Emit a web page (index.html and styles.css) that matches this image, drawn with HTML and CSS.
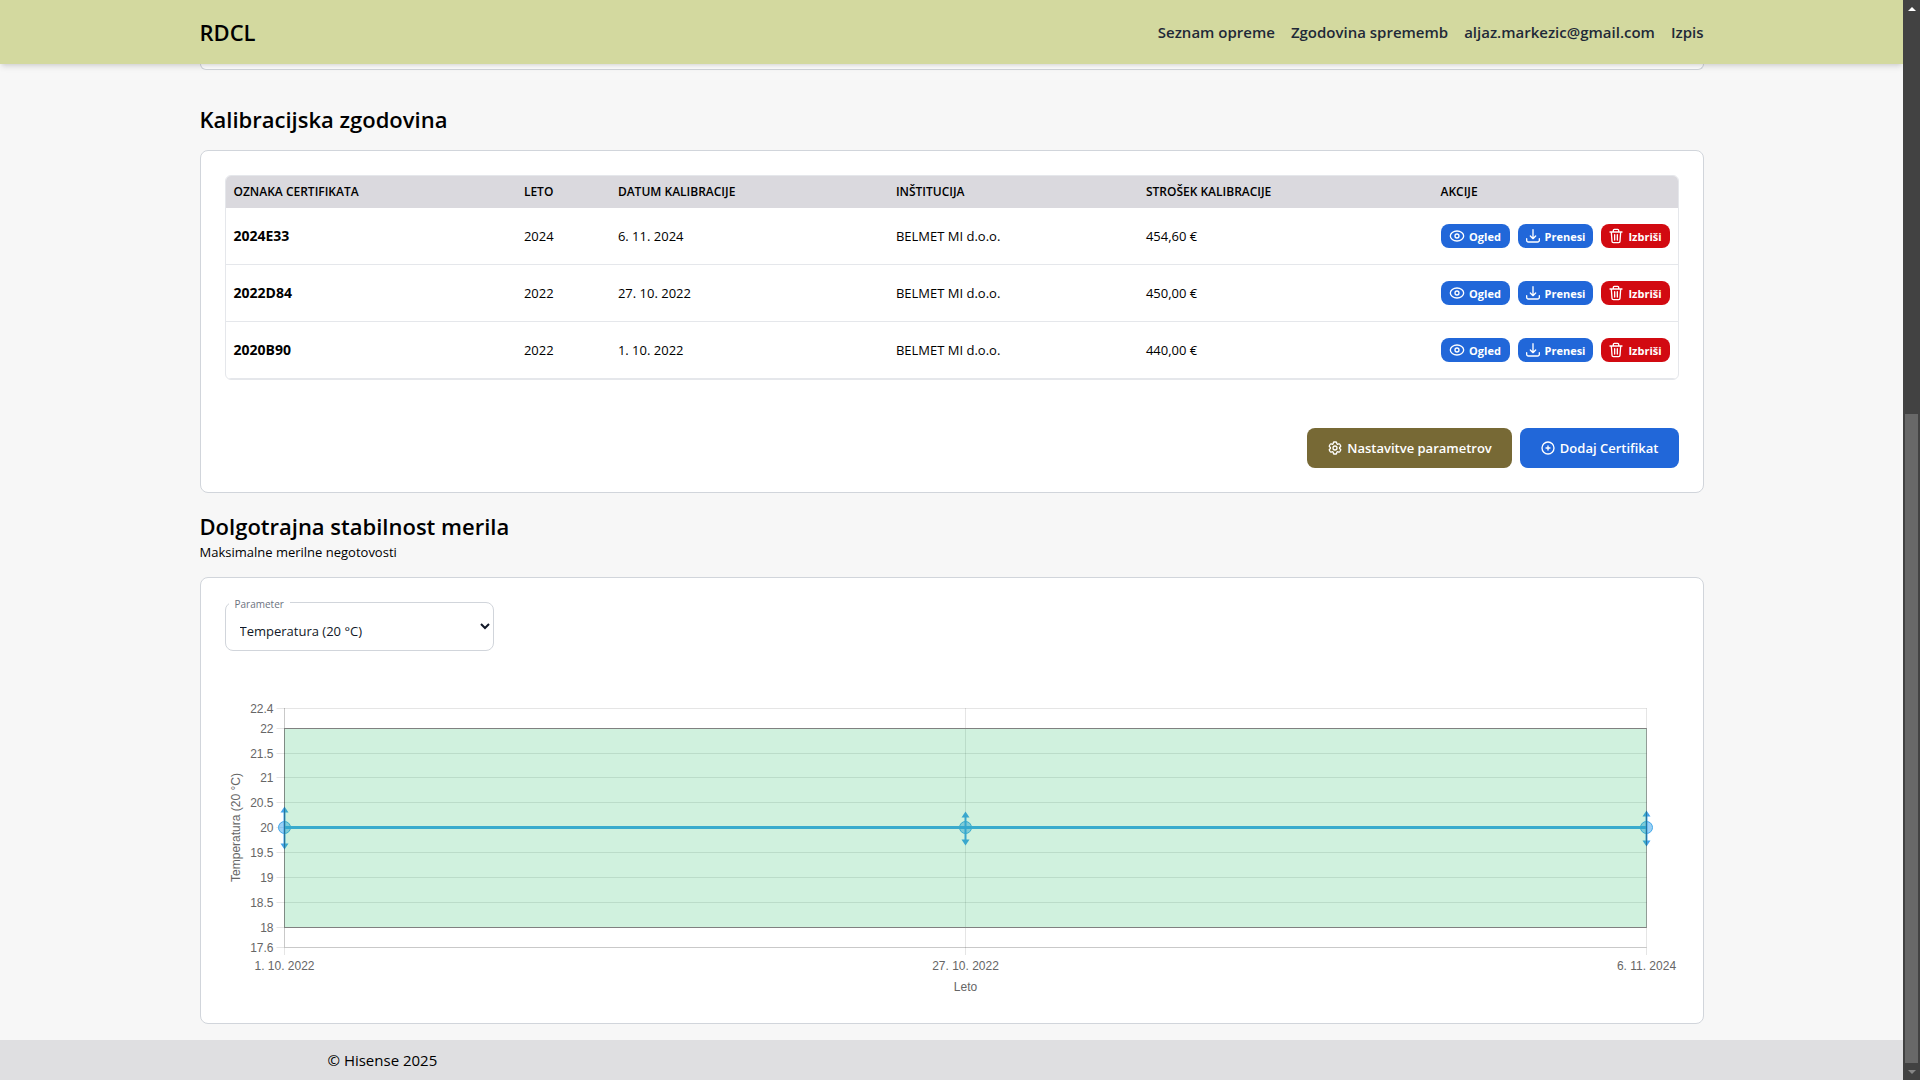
FILE: index.html
```html
<!DOCTYPE html>
<html lang="sl">
<head>
  <meta charset="UTF-8" />
  <meta name="viewport" content="width=device-width, initial-scale=1.0" />
  <title>RDCL</title>
  <link rel="stylesheet" href="styles.css">
</head>
<body>
  <!-- Icons -->
  <svg class="icon-defs" aria-hidden="true">
    <symbol id="icon-eye" viewBox="0 0 24 24">
      <ellipse cx="12" cy="12" rx="10" ry="7.500" />
      <circle cx="12" cy="12" r="3" />
    </symbol>
    <symbol id="icon-download" viewBox="0 0 24 24">
      <path d="M12 2.500v13.500m0 0 4-4m-4 4-4-4M2.500 16v2.500a2.500 2.500 0 0 0 2.500 2.500h14a2.500 2.500 0 0 0 2.500-2.500V16" />
    </symbol>
    <symbol id="icon-trash" viewBox="0 0 24 24">
      <path d="M3 6h18M5 6l1 14a2 2 0 0 0 2 2h8a2 2 0 0 0 2-2l1-14M8 6V3.500A1.500 1.500 0 0 1 9.500 2h5A1.500 1.500 0 0 1 16 3.500V6M10 10v8M14 10v8" />
    </symbol>
    <symbol id="icon-gear" viewBox="0 0 24 24">
      <path d="M9.600 3.940c.09-.54.56-.94 1.110-.94h2.590c.55 0 1.020.4 1.110.94l.21 1.280c.06.37.31.69.650.87.07.04.150.08.220.13.32.2.720.260 1.080.12l1.220-.45a1.130 1.130 0 0 1 1.370.49l1.300 2.250a1.130 1.130 0 0 1-.26 1.430l-1 .83c-.3.240-.440.610-.430.990v.25c-.010.380.130.750.430 1l1 .82c.43.350.540.960.260 1.430l-1.300 2.250a1.130 1.130 0 0 1-1.370.49l-1.220-.46c-.35-.130-.750-.070-1.070.12l-.22.130c-.330.180-.580.500-.640.870l-.22 1.280c-.090.540-.560.940-1.110.940h-2.590c-.550 0-1.020-.4-1.110-.94l-.21-1.280c-.060-.370-.310-.690-.650-.870l-.22-.130c-.320-.190-.720-.250-1.070-.120l-1.220.46a1.130 1.130 0 0 1-1.370-.49l-1.300-2.250a1.130 1.130 0 0 1 .26-1.430l1-.83c.3-.240.440-.610.430-.990v-.250c.010-.380-.130-.750-.430-1l-1-.820a1.130 1.130 0 0 1-.26-1.430l1.300-2.250a1.130 1.130 0 0 1 1.370-.49l1.220.450c.350.140.750.080 1.070-.12l.22-.120c.340-.190.590-.510.650-.880l.21-1.270Z" />
      <circle cx="12" cy="12" r="3" />
    </symbol>
    <symbol id="icon-plus" viewBox="0 0 24 24">
      <circle cx="12" cy="12" r="9" />
      <path d="M12 9v6M9 12h6" />
    </symbol>
  </svg>

  <header class="topbar">
    <div class="container topbar-inner">
      <a class="brand" href="#">RDCL</a>
      <nav class="nav">
        <a href="#">Seznam opreme</a>
        <a href="#">Zgodovina sprememb</a>
        <a href="#">aljaz.markezic@gmail.com</a>
        <a href="#">Izpis</a>
      </nav>
    </div>
  </header>

  <main class="container">
    <div class="card-end"></div>

    <!-- Kalibracijska zgodovina -->
    <section>
      <h2 class="history-title">Kalibracijska zgodovina</h2>
      <div class="card">
        <div class="table-wrap">
          <table>
            <thead>
              <tr>
                <th class="col-cert">Oznaka certifikata</th>
                <th class="col-year">Leto</th>
                <th class="col-date">Datum kalibracije</th>
                <th class="col-inst">Inštitucija</th>
                <th>Strošek kalibracije</th>
                <th class="col-actions">Akcije</th>
              </tr>
            </thead>
            <tbody>
              <tr>
                <th scope="row">2024E33</th>
                <td>2024</td>
                <td>6. 11. 2024</td>
                <td>BELMET MI d.o.o.</td>
                <td>454,60 €</td>
                <td>
                  <div class="actions">
                    <button class="btn-small"><svg class="icon"><use href="#icon-eye" /></svg>Ogled</button>
                    <button class="btn-small wide"><svg class="icon"><use href="#icon-download" /></svg>Prenesi</button>
                    <button class="btn-small danger"><svg class="icon"><use href="#icon-trash" /></svg>Izbriši</button>
                  </div>
                </td>
              </tr>
              <tr>
                <th scope="row">2022D84</th>
                <td>2022</td>
                <td>27. 10. 2022</td>
                <td>BELMET MI d.o.o.</td>
                <td>450,00 €</td>
                <td>
                  <div class="actions">
                    <button class="btn-small"><svg class="icon"><use href="#icon-eye" /></svg>Ogled</button>
                    <button class="btn-small wide"><svg class="icon"><use href="#icon-download" /></svg>Prenesi</button>
                    <button class="btn-small danger"><svg class="icon"><use href="#icon-trash" /></svg>Izbriši</button>
                  </div>
                </td>
              </tr>
              <tr>
                <th scope="row">2020B90</th>
                <td>2022</td>
                <td>1. 10. 2022</td>
                <td>BELMET MI d.o.o.</td>
                <td>440,00 €</td>
                <td>
                  <div class="actions">
                    <button class="btn-small"><svg class="icon"><use href="#icon-eye" /></svg>Ogled</button>
                    <button class="btn-small wide"><svg class="icon"><use href="#icon-download" /></svg>Prenesi</button>
                    <button class="btn-small danger"><svg class="icon"><use href="#icon-trash" /></svg>Izbriši</button>
                  </div>
                </td>
              </tr>
            </tbody>
          </table>
        </div>
        <div class="button-row">
          <button class="btn settings"><svg class="icon"><use href="#icon-gear" /></svg>Nastavitve parametrov</button>
          <button class="btn"><svg class="icon"><use href="#icon-plus" /></svg>Dodaj Certifikat</button>
        </div>
      </div>
    </section>

    <!-- Dolgotrajna stabilnost -->
    <section>
      <h2 class="stability-title">Dolgotrajna stabilnost merila</h2>
      <p class="subtitle">Maksimalne merilne negotovosti</p>
      <div class="card">
        <div class="field">
          <select id="parameter">
            <option>Temperatura (20 °C)</option>
          </select>
          <label for="parameter">Parameter</label>
        </div>
        <svg class="chart" id="chart" role="img" aria-label="Temperatura (20 °C)"></svg>
      </div>
    </section>
  </main>

  <footer class="footer">
    <div class="footer-inner">© Hisense 2025</div>
  </footer>

  <div class="scrollbar" aria-hidden="true">
    <span class="arrow up"></span>
    <span class="thumb"></span>
    <span class="arrow down"></span>
  </div>

  <script src="chart.js"></script>
</body>
</html>
```

FILE: styles.css
```css
:root {
  --header: #d3d99f;
  --background: #f7f7f7;
  --card: #ffffff;
  --border: #d1d5db;
  --line: #e5e7eb;
  --blue: #2167d9;
  --red: #d20a11;
  --olive: #776935;
  --text: #000000;
  --dark: #1f2937;
}

* {
  box-sizing: border-box;
}

body {
  margin: 0;
  min-height: 100vh;
  padding-right: 17px;
  display: flex;
  flex-direction: column;
  font-family: "Segoe UI", "Open Sans", "Noto Sans", sans-serif;
  font-size: 13px;
  line-height: 20px;
  background: var(--background);
  color: var(--text);
}

a {
  color: inherit;
  text-decoration: none;
}

.icon-defs {
  display: none;
}

.container {
  width: 100%;
  max-width: 1536px;
  margin: 0 auto;
  padding: 0 16px;
}

/* Header */
.topbar {
  position: sticky;
  top: 0;
  z-index: 10;
  background: var(--header);
  box-shadow: 0 4px 6px -1px rgba(0,0,0,0.1), 0 2px 4px -2px rgba(0,0,0,0.1);
}

.topbar-inner {
  display: flex;
  align-items: center;
  justify-content: space-between;
  height: 64px;
}

.brand {
  font-size: 22px;
  font-weight: 600;
  line-height: 32px;
}

.nav {
  display: flex;
  gap: 16px;
  font-size: 15px;
  font-weight: 600;
  color: var(--dark);
}

/* Cards */
.card {
  padding: 24px;
  background: var(--card);
  border: 1px solid var(--border);
  border-radius: 8px;
}

.card-end {
  height: 6px;
  background: var(--card);
  border: 1px solid var(--border);
  border-top: none;
  border-radius: 0 0 8px 8px;
}

h2 {
  margin: 0;
  font-size: 22px;
  font-weight: 600;
  line-height: 34px;
}

.history-title {
  margin: 32px 0 14px;
}

.stability-title {
  margin-top: 16px;
}

.subtitle {
  margin: 0 0 16px;
  line-height: 18px;
}

/* Table */
.table-wrap {
  border: 1px solid var(--line);
  border-radius: 6px;
  overflow: hidden;
}

table {
  width: 100%;
  border-spacing: 0;
  table-layout: fixed;
}

th, td {
  padding: 0 8px;
  text-align: left;
}

thead th {
  height: 32px;
  font-size: 12px;
  font-weight: 600;
  text-transform: uppercase;
  background: #dad9de;
}

tbody th, tbody td {
  height: 57px;
  border-bottom: 1px solid var(--line);
}

tbody th {
  font-size: 14px;
}

.col-cert { width: 20%; }
.col-year { width: 94px; }
.col-date { width: 278px; }
.col-inst { width: 250px; }
.col-actions { width: 245px; }

.actions {
  display: flex;
  gap: 8px;
}

button {
  display: flex;
  align-items: center;
  justify-content: center;
  border: none;
  border-radius: 8px;
  font-family: inherit;
  font-weight: 600;
  color: #fff;
  background: var(--blue);
  cursor: pointer;
}

.icon {
  width: 16px;
  height: 16px;
  fill: none;
  stroke: currentColor;
  stroke-width: 2;
  stroke-linecap: round;
  stroke-linejoin: round;
}

.btn-small {
  gap: 4px;
  width: 69px;
  height: 24px;
  padding: 0;
  font-size: 11px;
  font-weight: 700;
}

.wide {
  width: 75px;
}

.danger {
  background: var(--red);
}

.button-row {
  display: flex;
  justify-content: flex-end;
  gap: 8px;
  margin-top: 48px;
}

.btn {
  gap: 4px;
  height: 40px;
  padding: 0 20px;
  font-size: 13px;
}

.settings {
  background: var(--olive);
}

/* Parameter select */
.field {
  position: relative;
  width: 269px;
}

select {
  display: block;
  width: 100%;
  height: 49px;
  padding: 8px 4px 0 10px;
  font-family: inherit;
  font-size: 13px;
  color: #111827;
  background: var(--card);
  border: 1px solid var(--border);
  border-radius: 8px;
}

.field label {
  position: absolute;
  top: -8px;
  left: 4px;
  padding: 0 6px;
  font-size: 10px;
  color: #6b7280;
  background: var(--card);
}

/* Chart */
.chart {
  display: block;
  width: 100%;
  height: 324px;
  margin-top: 24px;
  overflow: visible;
  font-family: "Liberation Sans", Arial, sans-serif;
  font-size: 12px;
}

.chart text { fill: #666; }
.chart .middle { text-anchor: middle; }
.chart .end { text-anchor: end; }
.chart .grid { stroke: rgba(0,0,0,0.1); }
.chart .axis { stroke: rgba(0,0,0,0.12); }
.chart .limit { stroke: #808080; }
.chart .band { fill: rgba(18,184,92,0.2); stroke: rgba(0,0,0,0.3); }
.chart .series { stroke: #43a8ea; stroke-width: 3; }
.chart .point { fill: rgba(54,162,235,0.5); stroke: #43a8ea; }
.chart .error { stroke: #43a3ea; stroke-width: 2; }
.chart .tip { fill: #43a3ea; }

/* Footer */
.footer {
  margin-top: 16px;
  background: #dfdfe1;
}

.footer-inner {
  width: 100%;
  max-width: 1280px;
  margin: 0 auto;
  padding: 8px 16px;
  font-size: 15px;
  line-height: 24px;
}

/* Scrollbar */
.scrollbar {
  position: fixed;
  top: 0;
  right: 0;
  bottom: 0;
  z-index: 20;
  width: 17px;
  display: flex;
  flex-direction: column;
  align-items: center;
  background: #424242;
}

.thumb {
  flex: 1;
  width: 13px;
  margin-top: 397px;
  background: #686868;
}

.arrow {
  display: flex;
  align-items: center;
  justify-content: center;
  width: 17px;
  height: 17px;
}

.arrow::before {
  content: "";
  border: 4px solid transparent;
}

.up::before {
  border-top: none;
  border-bottom-color: #fff;
}

.down::before {
  border-bottom: none;
  border-top-color: #868686;
}
```

FILE: chart.js
```js
const points = [
  { label: "1. 10. 2022", value: 20, error: 0.42 },
  { label: "27. 10. 2022", value: 20, error: 0.33 },
  { label: "6. 11. 2024", value: 20, error: 0.35 }
];
const ticks = [22.4, 22, 21.5, 21, 20.5, 20, 19.5, 19, 18.5, 18, 17.6];
const min = 17.6;
const max = 22.4;

const chart = document.getElementById("chart");

function drawChart() {
  const left = 59;
  const right = chart.clientWidth - 33;
  const top = 33;
  const bottom = 272;
  // half pixels keep the 1px lines sharp
  const x = i => Math.floor(left + (right - left) * i / (points.length - 1)) + 0.5;
  const y = v => top + Math.floor((max - v) / (max - min) * (bottom - top) + 0.25) + 0.5;
  const line = (cls, x1, y1, x2, y2) =>
    `<line class="${cls}" x1="${x1}" y1="${y1}" x2="${x2}" y2="${y2}" />`;

  const x0 = x(0);
  const x1 = x(points.length - 1);
  let svg = "";

  ticks.forEach(t => {
    svg += line("grid", x0 - 8, y(t), x1, y(t));
    svg += `<text class="end" x="${x0 - 11}" y="${y(t) + 4}">${t}</text>`;
  });

  points.forEach((p, i) => {
    svg += line("grid", x(i), top, x(i), bottom + 8);
    svg += `<text class="middle" x="${x(i)}" y="${bottom + 23}">${p.label}</text>`;
  });

  svg += line("axis", x0, top, x0, bottom);
  svg += line("axis", x0, y(min), x1, y(min));

  // series and error bars
  svg += line("series", x0, y(20), x1, y(20));
  points.forEach((p, i) => {
    const cx = x(i);
    const up = y(p.value + p.error);
    const down = y(p.value - p.error) + 1;
    svg += line("error", cx, up + 3, cx, down - 3);
    svg += `<path class="tip" d="M${cx} ${up}l4 6h-8zM${cx} ${down}l4-6h-8z" />`;
    svg += `<circle class="point" cx="${cx}" cy="${y(p.value)}" r="6" />`;
  });

  // tolerance band
  svg += `<rect class="band" x="${x0}" y="${y(22)}" width="${x1 - x0}" height="${y(18) - y(22)}" />`;
  svg += line("limit", x0, y(22), x1, y(22));
  svg += line("limit", x0, y(18), x1, y(18));

  svg += `<text class="middle" x="${(x0 + x1) / 2}" y="${bottom + 44}">Leto</text>`;
  svg += `<text class="middle" transform="translate(15 ${(top + bottom) / 2}) rotate(-90)">Temperatura (20 °C)</text>`;

  chart.innerHTML = svg;
}

drawChart();
window.addEventListener("resize", drawChart);
```
